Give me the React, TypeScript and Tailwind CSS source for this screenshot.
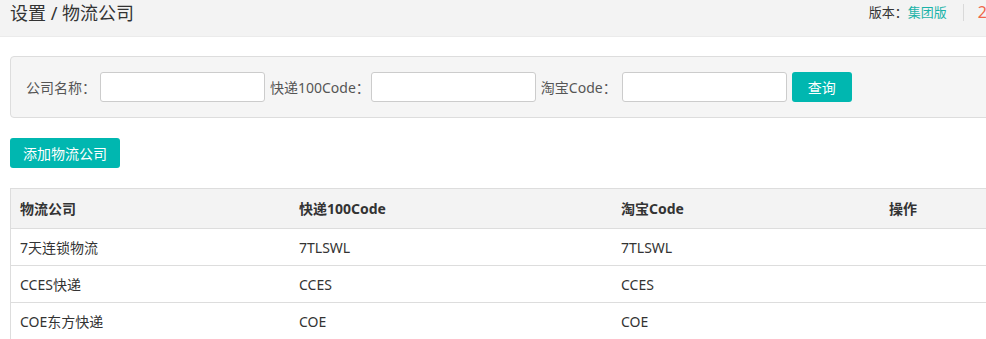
const rows = [
    { name: "7天连锁物流", kd100: "7TLSWL", taobao: "7TLSWL" },
    { name: "CCES快递", kd100: "CCES", taobao: "CCES" },
    { name: "COE东方快递", kd100: "COE", taobao: "COE" },
];

const font = { fontFamily: '"Noto Sans", "Noto Sans CJK SC", sans-serif' };

function App() {
    return (
        <div className="w-[986px] h-[339px] overflow-hidden bg-white text-[#333]" style={font}>
            {/* Top bar */}
            <header className="h-[37px] bg-[#f3f3f3] border-b border-[#ebebeb] flex justify-between items-start">
                <h1 className="pl-[10px] pt-[1px] text-[18px] leading-[24px] text-[#333] font-normal">设置 / 物流公司</h1>
                <div className="flex items-center pt-[3px] text-[13px] leading-[18px] -mr-[1px]">
                    <span className="text-[#333]">版本：</span>
                    <span className="text-[#1bb3a9]">集团版</span>
                    <span className="ml-[16px] mr-[14px] h-[17px] w-px bg-[#d9d9d9]" />
                    <span className="text-[#f0664a] text-[16px]">2</span>
                </div>
            </header>

            <div className="pl-[10px]">
                {/* Search box */}
                <div className="mt-[19px] w-[1100px] h-[62px] bg-[#f5f5f5] border border-[#dddddd] rounded-[4px] flex items-center pl-[15px] text-[14px] text-[#555]">
                    <label>公司名称：</label>
                    <input className="ml-[4px] w-[165px] h-[30px] bg-white border border-[#cccccc] rounded-[3px] outline-none" />
                    <label className="ml-[5px]">快递100Code：</label>
                    <input className="ml-[1px] w-[165px] h-[30px] bg-white border border-[#cccccc] rounded-[3px] outline-none" />
                    <label className="ml-[5px]">淘宝Code：</label>
                    <input className="ml-[5px] w-[165px] h-[30px] bg-white border border-[#cccccc] rounded-[3px] outline-none" />
                    <button className="ml-[5px] w-[60px] h-[30px] bg-[#00b7b0] text-white rounded-[3px] text-[14px]">查询</button>
                </div>

                {/* Add button */}
                <button className="mt-[20px] h-[30px] px-[13px] bg-[#00b7b0] text-white rounded-[3px] text-[14px]">添加物流公司</button>

                {/* Table */}
                <div className="mt-[20px] w-[1100px] border-l border-t border-[#dddddd] text-[14px]">
                    <div className="grid grid-cols-[279px_322px_268px_1fr] h-[40px] items-center bg-[#f3f3f3] border-b border-[#dddddd] font-bold text-[#333]">
                        <div className="pl-[9px]">物流公司</div>
                        <div className="pl-[9px]">快递100Code</div>
                        <div className="pl-[9px]">淘宝Code</div>
                        <div className="pl-[9px]">操作</div>
                    </div>
                    {rows.map((r) => (
                        <div key={r.name} className="grid grid-cols-[279px_322px_268px_1fr] h-[37px] items-center border-b border-[#dddddd] text-[#333]">
                            <div className="pl-[9px]">{r.name}</div>
                            <div className="pl-[9px]">{r.kd100}</div>
                            <div className="pl-[9px]">{r.taobao}</div>
                            <div className="pl-[9px]"></div>
                        </div>
                    ))}
                </div>
            </div>
        </div>
    );
}

export default App;
